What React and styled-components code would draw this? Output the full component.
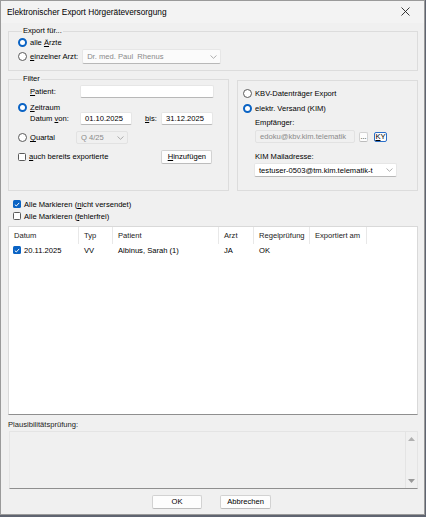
import React from "react";
import styled, { createGlobalStyle } from "styled-components";

const GlobalStyle = createGlobalStyle`
  html, body {
    margin: 0;
    padding: 0;
    background: #5f6470;
  }
  body {
    font-family: "Liberation Sans", Arial, sans-serif;
    font-size: 7.6px;
    color: #000;
  }
  * { box-sizing: border-box; }
`;

const Window = styled.div`
  width: 425px;
  height: 515px;
  background: #f0f0f0;
  border: 1px solid #9a9a9a;
  display: flex;
  flex-direction: column;
`;

const TitleBar = styled.div`
  height: 22px;
  background: #f3f3f3;
  display: flex;
  align-items: center;
  justify-content: space-between;
  padding: 0 14px 1px 6px;
  font-size: 8.3px;
`;

const Content = styled.div`
  flex: 1;
  display: flex;
  flex-direction: column;
  padding: 3px 6px 0 7px;
`;

const Group = styled.fieldset`
  margin: ${(p) => p.$mt || 0}px 0 0 0;
  padding: ${(p) => p.$pad || "0 5px 6px 9px"};
  border: 1px solid #dcdcdc;
  min-width: 0;
  display: flex;
  flex-direction: column;
`;

const Legend = styled.legend`
  padding: 0 1px;
  margin-left: 4px;
  line-height: 10px;
  font-size: 7.6px;
`;

const Row = styled.div`
  display: flex;
  align-items: center;
  height: ${(p) => p.$h || 12}px;
  margin-top: ${(p) => p.$mt || 0}px;
  padding-left: ${(p) => p.$pl || 0}px;
  gap: ${(p) => p.$gap || 0}px;
`;

const Label = styled.span`
  width: ${(p) => (p.$w ? `${p.$w}px` : "auto")};
  flex-shrink: 0;
  white-space: nowrap;
  color: ${(p) => (p.$muted ? "#222" : "#000")};
`;

const RadioDot = styled.span`
  width: 9px;
  height: 9px;
  border-radius: 50%;
  flex-shrink: 0;
  background: #fff;
  border: ${(p) => (p.$on ? "2.5px solid #0a63c4" : "1px solid #5a5a5a")};
  margin-right: 3px;
`;

const CheckBox = styled.span`
  width: 8px;
  height: 8px;
  flex-shrink: 0;
  border-radius: 1.5px;
  border: ${(p) => (p.$on ? "none" : "1px solid #5a5a5a")};
  background: ${(p) => (p.$on ? "#0a63c4" : "#fff")};
  display: inline-flex;
  align-items: center;
  justify-content: center;
  margin-right: 3px;
`;

const Input = styled.div`
  width: ${(p) => p.$w}px;
  height: ${(p) => p.$h || 13}px;
  flex-shrink: 0;
  background: ${(p) => (p.$disabled ? "#f0f0f0" : "#fff")};
  border: 1px solid ${(p) => (p.$disabled ? "#e2e2e2" : "#e6e6e6")};
  border-bottom-color: ${(p) => (p.$disabled ? "#e2e2e2" : "#b8b8b8")};
  border-radius: 2px;
  color: ${(p) => (p.$disabled ? "#8a8a8a" : "#000")};
  display: flex;
  align-items: center;
  justify-content: space-between;
  padding: 0 3px 0 4px;
  white-space: nowrap;
  overflow: hidden;
`;

const Button = styled.div`
  width: ${(p) => p.$w}px;
  height: ${(p) => p.$h || 14}px;
  flex-shrink: 0;
  background: #fdfdfd;
  border: 1px solid ${(p) => (p.$focus ? "#2a6fc9" : "#d2d2d2")};
  border-bottom-color: ${(p) => (p.$focus ? "#2a6fc9" : "#bcbcbc")};
  border-radius: 2px;
  display: flex;
  align-items: center;
  justify-content: center;
  font-size: ${(p) => p.$fs || 7.6}px;
  line-height: 1;
`;

const TwoCols = styled.div`
  display: grid;
  grid-template-columns: 221px 181px;
  gap: 8px;
  margin-top: 3px;
`;

const ListBox = styled.div`
  margin-top: 5px;
  height: 189px;
  background: #fff;
  border: 1px solid #d9d9d9;
  border-bottom-color: #8f8f8f;
`;

const ListHeader = styled.div`
  display: flex;
  height: 17px;
`;

const HeadCell = styled.div`
  width: ${(p) => p.$w}px;
  height: 100%;
  padding-left: 5px;
  display: flex;
  align-items: center;
  border-right: 1px solid #e8e8e8;
  color: #222;
`;

const ListRow = styled.div`
  display: flex;
  height: 12px;
  align-items: center;
`;

const Cell = styled.div`
  width: ${(p) => p.$w}px;
  padding-left: ${(p) => p.$pl || 5}px;
  display: flex;
  align-items: center;
  white-space: nowrap;
`;

const SectionLabel = styled.div`
  margin-top: 5px;
  height: 10px;
  line-height: 10px;
  color: #222;
`;

const TextArea = styled.div`
  margin-top: 1px;
  margin-left: 1px;
  height: 58px;
  border: 1px solid #e4e4e4;
  border-bottom-color: #8f8f8f;
  display: flex;
  justify-content: flex-end;
`;

const ScrollBar = styled.div`
  width: 12px;
  border-left: 1px solid #e4e4e4;
  display: flex;
  flex-direction: column;
  justify-content: space-between;
  align-items: center;
  padding: 5px 0 5px;
`;

const Footer = styled.div`
  display: flex;
  justify-content: center;
  gap: 18px;
  margin-top: 6px;
  padding-right: 3px;
`;

const Chevron = () => (
  <svg width="7" height="4" viewBox="0 0 7 4">
    <path d="M0.5 0.5 L3.5 3.3 L6.5 0.5" fill="none" stroke="#9c9c9c" strokeWidth="0.8" />
  </svg>
);

const Tick = () => (
  <svg width="6" height="5" viewBox="0 0 6 5">
    <path d="M0.8 2.6 L2.3 4 L5.2 0.9" fill="none" stroke="#fff" strokeWidth="1" />
  </svg>
);

const Radio = ({ on, children }) => (
  <>
    <RadioDot $on={on} />
    <Label>{children}</Label>
  </>
);

const Check = ({ on, children }) => (
  <>
    <CheckBox $on={on}>{on && <Tick />}</CheckBox>
    <Label>{children}</Label>
  </>
);

const cols = [
  { title: "Datum", w: 70 },
  { title: "Typ", w: 34 },
  { title: "Patient", w: 106 },
  { title: "Arzt", w: 35 },
  { title: "Regelprüfung", w: 56 },
  { title: "Exportiert am", w: 57 },
];

export default function App() {
  return (
    <>
      <GlobalStyle />
      <Window>
        <TitleBar>
          <span>Elektronischer Export Hörgeräteversorgung</span>
          <svg width="9" height="9" viewBox="0 0 9 9">
            <path d="M0.5 0.5 L8.5 8.5 M8.5 0.5 L0.5 8.5" stroke="#222" strokeWidth="0.9" />
          </svg>
        </TitleBar>
        <Content>
          <Group>
            <Legend>Export für...</Legend>
            <Row $h={12}>
              <Radio on>
                alle <u>Ä</u>rzte
              </Radio>
            </Row>
            <Row $h={15} $mt={1}>
              <Radio>
                <u>e</u>inzelner Arzt:
              </Radio>
              <Input $w={139} $h={15} style={{ marginLeft: 4, color: "#8a8a8a", background: "#fbfbfb" }}>
                <span>Dr. med. Paul&nbsp; Rhenus</span>
                <Chevron />
              </Input>
            </Row>
          </Group>

          <TwoCols>
            <Group $pad="0 4px 26px 9px">
              <Legend>Filter</Legend>
              <Row $h={13} $mt={1} $pl={12}>
                <Label $w={50}>
                  <u>P</u>atient:
                </Label>
                <Input $w={134} />
              </Row>
              <Row $h={10} $mt={4}>
                <Radio on>
                  <u>Z</u>eitraum
                </Radio>
              </Row>
              <Row $h={13} $pl={12}>
                <Label $w={50}>
                  Datum <u>v</u>on:
                </Label>
                <Input $w={52}>01.10.2025</Input>
                <Label $w={29} style={{ paddingLeft: 13 }}>
                  <u>b</u>is:
                </Label>
                <Input $w={52}>31.12.2025</Input>
              </Row>
              <Row $h={13} $mt={6}>
                <Radio>
                  <u>Q</u>uartal
                </Radio>
                <Input $w={52} $disabled style={{ marginLeft: 21 }}>
                  <span>Q 4/25</span>
                  <Chevron />
                </Input>
              </Row>
              <Row $h={15} $mt={5}>
                <Check>
                  <u>a</u>uch bereits exportierte
                </Check>
                <Button $w={51} style={{ marginLeft: 53 }}>
                  <u>H</u>inzufügen
                </Button>
              </Row>
            </Group>

            <Group $mt={6} $pad="7px 4px 13px 5px">
              <Row $h={11}>
                <Radio>KBV-Datenträger Export</Radio>
              </Row>
              <Row $h={11} $mt={4}>
                <Radio on>elektr. Versand (KIM)</Radio>
              </Row>
              <Row $h={10} $mt={3} $pl={12}>
                <Label>Empfänger:</Label>
              </Row>
              <Row $h={13} $mt={3} $pl={12}>
                <Input $w={100} $disabled>
                  edoku@kbv.kim.telematik
                </Input>
                <Button $w={9} $h={10} $fs={7} style={{ marginLeft: 4, alignItems: "flex-end", paddingBottom: 1 }}>
                  ...
                </Button>
                <Button $w={13} $h={10} $focus style={{ marginLeft: 6 }}>
                  <u>K</u>Y
                </Button>
              </Row>
              <Row $h={10} $mt={8} $pl={12}>
                <Label>KIM Mailadresse:</Label>
              </Row>
              <Row $h={14} $mt={2} $pl={11}>
                <Input $w={143} $h={14}>
                  <span>testuser-0503@tm.kim.telematik-t</span>
                  <Chevron />
                </Input>
              </Row>
            </Group>
          </TwoCols>

          <Row $h={10} $mt={8} $pl={5}>
            <Check on>
              Alle Markieren (<u>n</u>icht versendet)
            </Check>
          </Row>
          <Row $h={10} $mt={2} $pl={5}>
            <Check>
              Alle Markieren (<u>f</u>ehlerfrei)
            </Check>
          </Row>

          <ListBox>
            <ListHeader>
              {cols.map((c) => (
                <HeadCell key={c.title} $w={c.w}>
                  {c.title}
                </HeadCell>
              ))}
            </ListHeader>
            <ListRow>
              <Cell $w={70} $pl={4}>
                <CheckBox $on>
                  <Tick />
                </CheckBox>
                20.11.2025
              </Cell>
              <Cell $w={34}>VV</Cell>
              <Cell $w={106}>Albinus, Sarah (1)</Cell>
              <Cell $w={35}>JA</Cell>
              <Cell $w={56}>OK</Cell>
              <Cell $w={57} />
            </ListRow>
          </ListBox>

          <SectionLabel>Plausibilitätsprüfung:</SectionLabel>
          <TextArea>
            <ScrollBar>
              <svg width="7" height="4" viewBox="0 0 7 4">
                <path d="M3.5 0 L7 4 L0 4 Z" fill="#b0b0b0" />
              </svg>
              <svg width="7" height="4" viewBox="0 0 7 4">
                <path d="M0 0 L7 0 L3.5 4 Z" fill="#9a9a9a" />
              </svg>
            </ScrollBar>
          </TextArea>

          <Footer>
            <Button $w={50}>OK</Button>
            <Button $w={51}>Abbrechen</Button>
          </Footer>
        </Content>
      </Window>
    </>
  );
}
